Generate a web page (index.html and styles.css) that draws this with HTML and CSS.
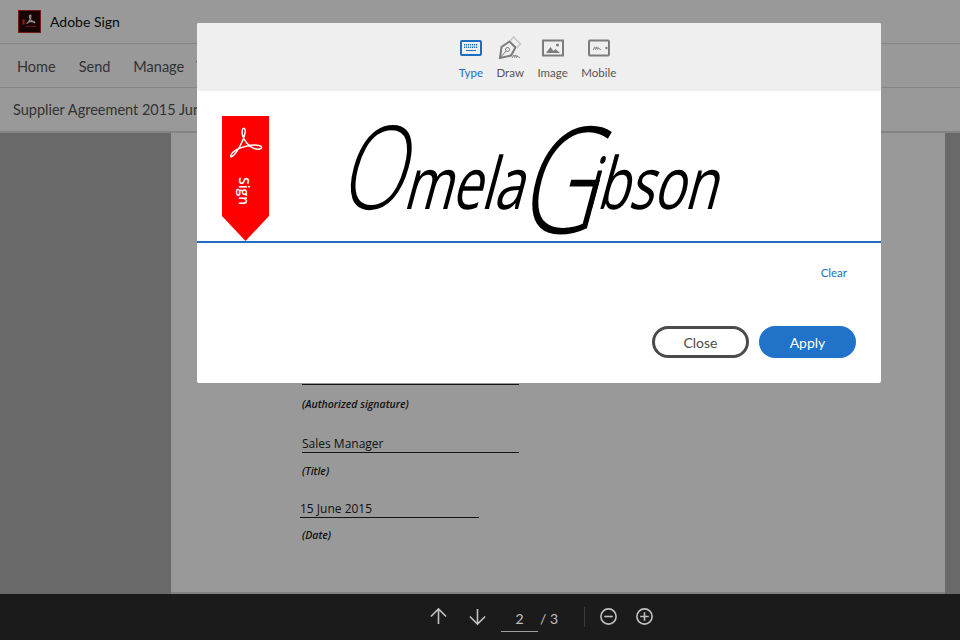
FILE: index.html
```html
<!DOCTYPE html>
<html lang="en">
<head>
<meta charset="utf-8">
<title>Adobe Sign</title>
<link rel="stylesheet" href="styles.css">
</head>
<body>
<div class="app">
  <header class="brandbar">
    <svg class="logo" viewBox="0 0 24 24" aria-hidden="true">
      <rect x="0.5" y="0.5" width="23" height="23" fill="#2a0807" stroke="#c42a20"/>
      <rect x="4.500" y="10" width="2.500" height="5" fill="#d8352b"/>
      <path d="M9 14.500c2-2 4.500-6 4.500-8s-2-1.500-1.500 1 2.500 5 6 6M10 13c2-1 4-1.500 7.500-1" fill="none" stroke="#f2e6e6" stroke-width="1.300"/>
      <rect x="8" y="16.500" width="11" height="1.200" fill="#a92a20"/>
    </svg>
    <span class="brandname">Adobe Sign</span>
  </header>
  <nav class="navbar">
    <span class="navitem">Home</span>
    <span class="navitem">Send</span>
    <span class="navitem">Manage</span>
    <span class="navitem navitem-tight">Templates</span>
  </nav>
  <div class="titlebar">Supplier Agreement 2015 June</div>
  <main class="viewer">
    <section class="sheet">
      <div class="field field-sign">
        <div class="rule"></div>
        <em class="caption">(Authorized signature)</em>
      </div>
      <div class="field field-title">
        <div class="value">Sales Manager</div>
        <em class="caption">(Title)</em>
      </div>
      <div class="field field-date">
        <div class="value value-date">15 June 2015</div>
        <em class="caption">(Date)</em>
      </div>
    </section>
  </main>
  <footer class="toolbar">
    <svg class="tool tool-up" viewBox="0 0 20 20" aria-hidden="true"><path d="M10 18V2M2 10l8-8 8 8"/></svg>
    <svg class="tool tool-down" viewBox="0 0 20 20" aria-hidden="true"><path d="M10 2v16M2 10l8 8 8-8"/></svg>
    <div class="pager"><span class="pagenum">2</span><span class="pagetotal">/ 3</span></div>
    <span class="divider"></span>
    <svg class="tool tool-minus" viewBox="0 0 20 20" aria-hidden="true"><circle cx="10" cy="10" r="8"/><path d="M5.500 10h9"/></svg>
    <svg class="tool tool-plus" viewBox="0 0 20 20" aria-hidden="true"><circle cx="10" cy="10" r="8"/><path d="M5.500 10h9M10 5.500v9"/></svg>
  </footer>
</div>
<div class="scrim"></div>
<div class="dialog">
  <div class="tabs">
    <div class="tab tab-active">
      <svg class="tabicon" viewBox="0 0 24 20" aria-hidden="true">
        <rect x="2" y="3" width="20" height="14" rx="1" class="ln heavy"/>
        <path d="M5 6.800h14M5 9.300h14" class="dots"/>
        <path d="M7 12.500h10" class="ln mid"/>
      </svg>
      <span>Type</span>
    </div>
    <div class="tab">
      <svg class="tabicon tabicon-draw" viewBox="0 0 24 24" aria-hidden="true">
        <path d="M2 22l1.500-11 8-5.500 6 6-4.500 8z" class="ln heavy"/>
        <path d="M2 22l6-7" class="ln mid"/>
        <circle cx="9.500" cy="13.500" r="2" class="ln mid"/>
        <path d="M12 5l3.500-4 7 7-4 4" class="ln pale"/>
        <path d="M14 22c1-1 1.500-3.500 2-3s0 2.500.5 2.500 1-3 1.500-2.500 0 2.500.5 2.500 1-2.500 1.500-1.500.5 1.500 2 1.500" class="ln mid"/>
      </svg>
      <span>Draw</span>
    </div>
    <div class="tab">
      <svg class="tabicon" viewBox="0 0 24 20" aria-hidden="true">
        <rect x="2" y="2.500" width="20" height="15" class="ln heavy"/>
        <path d="M5 15l4.500-6 3 4 2-2 4.500 4z" class="fillin"/>
        <circle cx="16.500" cy="7" r="1.500" class="fillin"/>
      </svg>
      <span>Image</span>
    </div>
    <div class="tab">
      <svg class="tabicon" viewBox="0 0 24 20" aria-hidden="true">
        <rect x="2" y="2.500" width="20" height="15" rx="1" class="ln heavy"/>
        <path d="M6 12c1-1 1.500-3.500 2-3s0 2.500.5 2.500 1-3 1.500-2.500 0 2.500.5 2.500 1-2.500 1.500-1.500.5 1.500 2 1.500" class="ln mid"/>
        <circle cx="19.500" cy="10" r="1.200" class="fillin"/>
      </svg>
      <span>Mobile</span>
    </div>
  </div>
  <div class="signarea">
    <div class="flag">
      <svg class="flagmark" viewBox="0 0 34 32" aria-hidden="true">
        <path d="M2 30C5 29 10 22 13 15 16 8 17 3 15.500 1.500 14 .5 12.500 3 13.500 8 14.500 13 20 20 25 21.500 30 23 33 22 32.500 20 32 18 25 17.500 18 19 11 20.500 4 24 2 28 1.500 29.500 2 30 2 30z"/>
      </svg>
      <span class="flagtext">Sign</span>
    </div>
    <div class="signature"><span class="sig-cap">O</span>mela<span class="sig-g">G</span>ibson</div>
  </div>
  <div class="lower">
    <a class="clear">Clear</a>
    <div class="actions">
      <button class="btn btn-close">Close</button>
      <button class="btn btn-apply">Apply</button>
    </div>
  </div>
</div>
</body>
</html>
```
FILE: styles.css
```css
* { box-sizing: border-box; }
html, body { margin: 0; padding: 0; width: 960px; height: 640px; overflow: hidden; }
body { font-family: Lato, "Open Sans", sans-serif; background: #fff; position: relative; }

.app { display: flex; flex-direction: column; width: 960px; height: 640px; }

.brandbar { height: 44px; display: flex; align-items: center; padding-left: 18px; gap: 9px; background: #fff; border-bottom: 1px solid #e0e0e0; }
.logo { width: 23px; height: 23px; }
.brandname { font-size: 14px; color: #111; }

.navbar { height: 44px; display: flex; align-items: center; padding: 2px 0 0 17px; gap: 23px; background: #fff; border-bottom: 1px solid #e0e0e0; }
.navitem { font-size: 14.500px; color: #555; }
.navitem-tight { margin-left: -11px; }

.titlebar { height: 45px; display: flex; align-items: center; padding-left: 13px; font-size: 14.500px; color: #555; background: #fff; border-bottom: 2px solid #ddd; }

.viewer { flex: 1; min-height: 0; background: #b0b0b0; padding: 0 15px 0 171px; }
.sheet { height: 100%; background: #fff; padding: 251px 0 0 131px; display: flex; flex-direction: column; border-bottom: 2px solid #d8d8d8; }
.field { display: flex; flex-direction: column; width: 217px; }
.field-sign { height: 53px; }
.field-title { height: 65px; }
.rule { height: 1px; background: #222; }
.caption { font-family: "Open Sans", sans-serif; font-size: 10.500px; font-weight: 600; color: #222; line-height: 14px; margin-top: 11px; }
.field-sign .caption { margin-top: 12px; }
.field-date .caption { margin-top: 10px; }
.value { font-family: "Open Sans", sans-serif; font-size: 12px; line-height: 13px; padding-bottom: 2px; color: #222; border-bottom: 1px solid #222; }
.value-date { width: 179px; margin-left: -2px; }

.toolbar { height: 46px; background: #1b1b1b; display: flex; align-items: center; color: #c0c0c0; padding-left: 429px; position: relative; z-index: 2; }
.tool { width: 19px; height: 19px; fill: none; stroke: #c0c0c0; stroke-width: 1.700; margin-bottom: 2px; flex: none; }
.tool-down { margin-left: 20px; }
.pager { display: flex; align-items: flex-start; font-size: 14px; margin-left: 14px; height: 30px; padding-top: 2px; }
.pagenum { width: 37px; text-align: center; height: 28px; line-height: 30px; border-bottom: 1px solid #a0a0a0; }
.pagetotal { margin-left: 2px; line-height: 30px; white-space: nowrap; width: 27px; }
.divider { width: 1px; height: 20px; background: #3c3c3c; margin: 0 14px 0 17px; flex: none; }
.tool-plus { margin-left: 17px; }

.scrim { position: absolute; inset: 0; background: rgba(0, 0, 0, 0.4); }

.dialog { position: absolute; left: 197px; top: 23px; width: 684px; height: 360px; background: #fff; display: flex; flex-direction: column; border-radius: 2px; z-index: 3; }

.tabs { height: 68px; background: #efefef; display: flex; justify-content: center; gap: 13.500px; padding: 15px 3px 0 0; border-radius: 2px 2px 0 0; }
.tab { display: flex; flex-direction: column; align-items: center; gap: 8px; font-size: 11.500px; color: #555; min-width: 24px; }
.tab span { line-height: 14px; }
.tab-active { color: #1c6ec0; }
.tabicon { width: 24px; height: 20px; fill: none; }
.tabicon-draw { height: 24px; margin: -2px 0; }
.ln { fill: none; stroke: #7c7c7c; stroke-width: 1.500; }
.heavy { stroke-width: 2; }
.mid { stroke-width: 1; }
.pale { stroke: #c6c6c6; }
.fillin { fill: #7c7c7c; }
.tab-active .ln { stroke: #1c6ec0; }
.dots { stroke: #1c6ec0; stroke-width: 1.500; stroke-dasharray: 1.200 .8; }

.signarea { height: 152px; position: relative; border-bottom: 2px solid #1f6cc0; display: flex; padding-left: 139px; }
.flag { position: absolute; left: 25px; top: 25px; width: 47px; height: 125px; background: #fe0000; clip-path: polygon(0 0, 100% 0, 100% 80%, 50% 100%, 0 80%); display: flex; flex-direction: column; align-items: center; padding-top: 11px; }
.flagmark { width: 34px; height: 32px; fill: none; stroke: #fff; stroke-width: 1.500; }
.flagtext { color: #fff; font-family: "Open Sans", sans-serif; font-size: 14px; font-weight: 600; writing-mode: vertical-rl; margin-top: 18px; line-height: 16px; margin-right: 4px; }
.signature { font-family: "Open Sans", sans-serif; font-size: 72px; line-height: 100px; height: 100px; margin-top: 23px; color: #000; white-space: nowrap; transform-origin: left bottom; transform: scaleX(.74) skewX(-20deg); letter-spacing: -1px; }
.sig-cap { font-size: 116px; line-height: 100px; font-weight: 300; }
.sig-g { font-size: 148px; line-height: 100px; font-weight: 300; vertical-align: -24px; letter-spacing: -24px; }

.lower { flex: 1; display: flex; flex-direction: column; padding: 23px 25px 0 0; align-items: flex-end; }
.clear { font-size: 11.500px; color: #1c6ec0; line-height: 14px; margin-right: 9px; }
.actions { display: flex; gap: 10px; margin-top: 45px; }
.btn { width: 97px; height: 32px; border-radius: 16px; font-family: inherit; font-size: 14px; padding: 0; margin-top: 1px; }
.btn-close { background: #fff; border: 3px solid #4b4b4b; color: #4b4b4b; }
.btn-apply { background: #2073c9; border: 0; color: #fff; font-weight: 400; }
```
